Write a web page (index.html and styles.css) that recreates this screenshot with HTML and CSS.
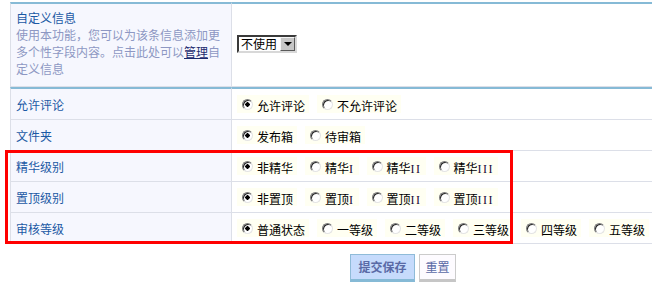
FILE: index.html
```html
<!DOCTYPE html>
<html lang="zh-CN">
<head>
<meta charset="utf-8">
<title>表单</title>
<link rel="stylesheet" href="styles.css">
</head>
<body>
<div class="page">
  <div class="form">
    <div class="lbl top first">
      <div class="lbl-title">自定义信息</div>
      <div class="lbl-desc">使用本功能，您可以为该条信息添加更多个性字段内容。点击此处可以<a href="#" class="manage">管理</a>自定义信息</div>
    </div>
    <div class="val top first">
      <div class="select"><span class="select-text">不使用</span><span class="select-btn"></span></div>
    </div>

    <div class="lbl top">允许评论</div>
    <div class="val top">
      <label class="opt"><input type="radio" name="c" checked><span>允许评论</span></label>
      <label class="opt"><input type="radio" name="c"><span>不允许评论</span></label>
    </div>

    <div class="lbl">文件夹</div>
    <div class="val">
      <label class="opt"><input type="radio" name="f" checked><span>发布箱</span></label>
      <label class="opt"><input type="radio" name="f"><span>待审箱</span></label>
    </div>

    <div class="lbl">精华级别</div>
    <div class="val">
      <label class="opt"><input type="radio" name="e" checked><span>非精华</span></label>
      <label class="opt"><input type="radio" name="e"><span>精华<i class="rn">I</i></span></label>
      <label class="opt"><input type="radio" name="e"><span>精华<i class="rn">II</i></span></label>
      <label class="opt"><input type="radio" name="e"><span>精华<i class="rn">III</i></span></label>
    </div>

    <div class="lbl">置顶级别</div>
    <div class="val">
      <label class="opt"><input type="radio" name="t" checked><span>非置顶</span></label>
      <label class="opt"><input type="radio" name="t"><span>置顶<i class="rn">I</i></span></label>
      <label class="opt"><input type="radio" name="t"><span>置顶<i class="rn">II</i></span></label>
      <label class="opt"><input type="radio" name="t"><span>置顶<i class="rn">III</i></span></label>
    </div>

    <div class="lbl">审核等级</div>
    <div class="val">
      <label class="opt"><input type="radio" name="a" checked><span>普通状态</span></label>
      <label class="opt"><input type="radio" name="a"><span>一等级</span></label>
      <label class="opt"><input type="radio" name="a"><span>二等级</span></label>
      <label class="opt"><input type="radio" name="a"><span>三等级</span></label>
      <label class="opt"><input type="radio" name="a"><span>四等级</span></label>
      <label class="opt"><input type="radio" name="a"><span>五等级</span></label>
    </div>
  </div>

  <div class="highlight"></div>

  <div class="actions">
    <button type="submit" class="btn btn-primary">提交保存</button>
    <button type="reset" class="btn btn-reset">重置</button>
  </div>
</div>
</body>
</html>
```
FILE: styles.css
```css
html, body {
  margin: 0;
  padding: 0;
  overflow: hidden;
  background: #fff;
}
body {
  font-family: "Noto Sans CJK SC", "Liberation Sans", sans-serif;
  font-size: 12px;
  color: #000;
}
.page {
  position: relative;
  padding-top: 2px;
  width: 652px;
  overflow: hidden;
}
.form {
  display: grid;
  grid-template-columns: 222px 450px;
  margin-left: 10px;
}
.lbl, .val {
  box-sizing: border-box;
  height: 31px;
  border-bottom: 1px solid #dcdfe8;
  padding: 0 5px;
  display: flex;
  align-items: center;
  line-height: 17px;
  min-width: 0;
}
.lbl {
  border-left: 1px solid #dcdfe8;
  border-right: 1px solid #dcdfe8;
  background: #f6f7fe;
  color: #1b59a4;
}
.val {
  white-space: nowrap;
}
.top {
  border-top: 2px solid #86bad6;
  height: 33px;
}
.lbl.first, .val.first {
  height: 85px;
}
.lbl.first {
  flex-direction: column;
  align-items: stretch;
  justify-content: center;
  padding-bottom: 4px;
}
.lbl-desc {
  color: #8d97c3;
}
.manage {
  color: #1c2a6e;
  text-decoration: underline;
}
.select {
  display: inline-flex;
  box-sizing: border-box;
  width: 60px;
  height: 18px;
  border: 2px solid;
  border-color: #3a3a3a #d8d8d8 #d8d8d8 #3a3a3a;
  background: #fff;
  margin-top: -2px;
}
.select-text {
  flex: 1;
  padding-left: 2px;
  line-height: 14px;
  color: #000;
}
.select-btn {
  box-sizing: border-box;
  width: 15px;
  background: #c6c6c6;
  border: 1px solid;
  border-color: #f4f4f4 #5a5a5a #5a5a5a #f4f4f4;
  display: flex;
  align-items: center;
  justify-content: center;
}
.select-btn::after {
  content: "";
  border-left: 4px solid transparent;
  border-right: 4px solid transparent;
  border-top: 4px solid #000;
}
.opt {
  display: inline-flex;
  align-items: center;
  flex: none;
  height: 18px;
  padding: 0 4px 0 5px;
  margin-right: 8px;
  background: #fffff2;
  white-space: nowrap;
}
.opt span {
  padding-top: 4px;
  line-height: 14px;
}
.opt input {
  -webkit-appearance: none;
  appearance: none;
  box-sizing: border-box;
  width: 11px;
  height: 11px;
  margin: 0 4px 0 0;
  border-radius: 50%;
  border: 1px solid;
  border-color: #7c7c7c #e4e4e4 #e4e4e4 #7c7c7c;
  box-shadow: inset 1px 1px 0 #2a2a2a;
  background: #fff;
}
.opt input:checked {
  background: radial-gradient(circle at 50% 50%, #000 0 2px, #fff 2.4px);
}
.rn {
  font-family: "Liberation Serif", serif;
  font-style: normal;
  letter-spacing: 1.5px;
  color: #1a0a3a;
}
.highlight {
  position: absolute;
  left: 5px;
  top: 150px;
  width: 508px;
  height: 94px;
  box-sizing: border-box;
  border: 3px solid #ff0000;
  pointer-events: none;
}
.actions {
  display: flex;
  gap: 4px;
  margin: 10px 0 0 350px;
  padding-bottom: 10px;
}
.btn {
  box-sizing: border-box;
  height: 28px;
  font-family: inherit;
  font-size: 12px;
  color: #5a6aa6;
  cursor: pointer;
  line-height: 14px;
}
.btn-primary {
  width: 65px;
  padding: 0;
  font-weight: bold;
  background: #c6dbfc;
  border: 1px solid #8fbbd8;
  border-bottom: 3px solid #86bad6;
}
.btn-reset {
  width: 37px;
  padding: 0;
  background: #fdfbff;
  border: 1px solid #cbcbcb;
  border-bottom: 3px solid #c6c6c6;
}
```
